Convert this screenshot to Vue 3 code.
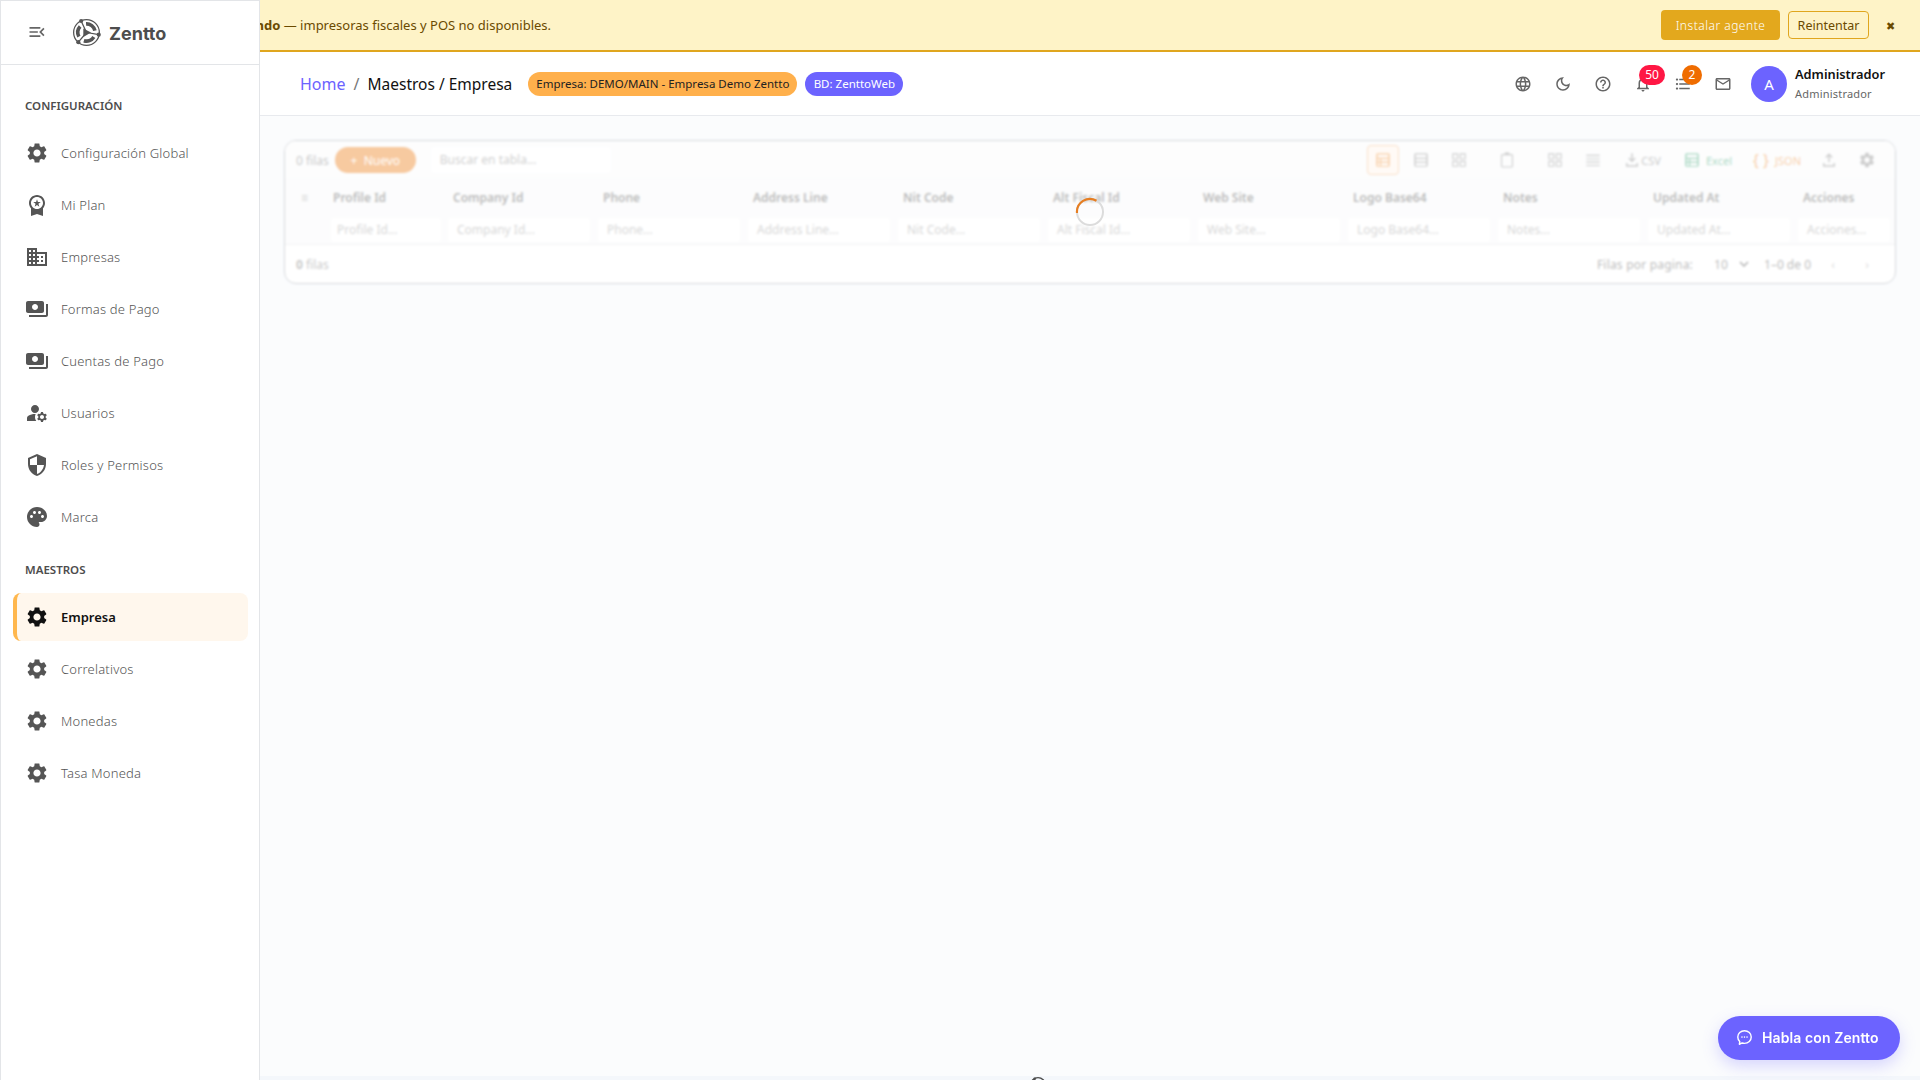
<template>
  <div class="app-root">
    <div class="agent-banner">
      <p class="banner-text"><b>No respondiendo</b> — impresoras fiscales y POS no disponibles.</p>
      <button class="btn-install">Instalar agente</button>
      <button class="btn-retry">Reintentar</button>
      <span class="banner-close">✖</span>
    </div>

    <aside class="drawer">
      <div class="drawer-head">
        <svg class="menu-open" viewBox="0 0 24 24"><path :d="icons.menuOpen" /></svg>
        <svg class="logo" viewBox="0 0 32 32">
          <circle cx="16" cy="16" r="14.200" fill="none" stroke="#555" stroke-width="1.400" />
          <g fill="none" stroke="#555">
            <path d="M15.500 6.500A9.500 9.500 0 0 1 25.300 14" stroke-width="4" />
            <path d="M24.100 21A9.500 9.500 0 0 1 13.100 25" stroke-width="4" />
            <path d="M7.600 20.500A9.500 9.500 0 0 1 9 9.500" stroke-width="4" />
            <path d="M16 16 10.100 3.300M16 16l13.800 2.400M16 16 7 26.700" stroke-width="1.400" />
          </g>
          <path d="M12.500 11.500 21 16l-8.500 5z" fill="#555" />
          <circle cx="10.100" cy="3.300" r="2.300" fill="#555" />
          <circle cx="29.500" cy="18.400" r="2.300" fill="#555" />
          <circle cx="7" cy="26.700" r="2.300" fill="#555" />
        </svg>
        <span class="brand">Zentto</span>
      </div>

      <template v-for="group in menu" :key="group.title">
        <div class="group-title">{{ group.title }}</div>
        <div
          v-for="item in group.items"
          :key="item.label"
          class="nav-item"
          :class="{ active: item.active }"
        >
          <svg class="nav-icon" viewBox="0 0 24 24"><path :d="icons[item.icon]" /></svg>
          <span>{{ item.label }}</span>
        </div>
      </template>
    </aside>

    <div class="page">
      <header class="appbar">
        <nav class="crumbs">
          <a class="crumb-home">Home</a>
          <span class="crumb-sep">/</span>
          <span class="crumb-current">Maestros / Empresa</span>
        </nav>
        <span class="chip chip-company">Empresa: DEMO/MAIN - Empresa Demo Zentto</span>
        <span class="chip chip-db">BD: ZenttoWeb</span>

        <div class="bar-actions">
          <button v-for="a in barActions" :key="a.icon" class="bar-btn">
            <svg viewBox="0 0 24 24"><path :d="icons[a.icon]" /></svg>
            <span v-if="a.badge" class="badge" :class="a.tone">{{ a.badge }}</span>
          </button>
        </div>

        <div class="avatar">A</div>
        <div class="user">
          <strong>Administrador</strong>
          <small>Administrador</small>
        </div>
      </header>

      <main class="content">
        <section class="grid-card">
          <div class="grid-toolbar">
            <span class="muted">0 filas</span>
            <button class="btn-new">+ &nbsp;Nuevo</button>
            <div class="grid-search">Buscar en tabla...</div>
            <div class="tools">
              <span class="tool tool-on"><svg viewBox="0 0 24 24"><path :d="icons.table" /></svg></span>
              <span class="tool"><svg viewBox="0 0 24 24"><path :d="icons.rows" /></svg></span>
              <span class="tool"><svg viewBox="0 0 24 24"><path :d="icons.apps" /></svg></span>
              <span class="tool wide"><svg viewBox="0 0 24 24"><path :d="icons.clip" /></svg></span>
              <span class="tool wide"><svg viewBox="0 0 24 24"><path :d="icons.apps" /></svg></span>
              <span class="tool"><svg viewBox="0 0 24 24"><path :d="icons.lines" /></svg></span>
              <span class="tool-text csv"><svg viewBox="0 0 24 24"><path :d="icons.download" /></svg>CSV</span>
              <span class="tool-text excel"><svg viewBox="0 0 24 24"><path :d="icons.table" /></svg>Excel</span>
              <span class="tool-text json"><b>{ }</b>JSON</span>
              <span class="tool upload"><svg viewBox="0 0 24 24"><path :d="icons.upload" /></svg></span>
              <span class="tool"><svg viewBox="0 0 24 24"><path :d="icons.gear" /></svg></span>
            </div>
          </div>

          <div class="grid-head">
            <span class="row-num">≡</span>
            <span v-for="c in columns" :key="c" class="col-name">{{ c }}</span>
          </div>
          <div class="grid-filter">
            <span class="row-num"></span>
            <span v-for="c in columns" :key="c" class="filter-cell"><i>{{ c }}...</i></span>
          </div>

          <div class="grid-foot">
            <span class="muted"><b>0</b> filas</span>
            <div class="pager">
              <span class="page-label">Filas por pagina:</span>
              <span class="page-size">10
                <svg viewBox="0 0 24 24"><path d="M7.410 8.590 12 13.170l4.590-4.580L18 10l-6 6-6-6z" /></svg>
              </span>
              <span>1–0 de 0</span>
              <span class="page-arrow">‹</span>
              <span class="page-arrow">›</span>
            </div>
          </div>
        </section>

        <div class="load-veil"></div>
        <svg class="spinner" viewBox="0 0 30 30">
          <circle cx="15" cy="15" r="13" fill="none" stroke="#dcdcdc" stroke-width="2" />
          <path d="M2 16A13 13 0 0 1 21.500 3.700" fill="none" stroke="#e67e22" stroke-width="2.200" />
        </svg>
      </main>

      <footer class="page-foot">
        <svg class="foot-logo" viewBox="0 0 32 32">
          <circle cx="16" cy="16" r="13" fill="none" stroke="#4d4d4d" stroke-width="2.400" />
          <circle cx="10" cy="5" r="2.300" fill="#4d4d4d" />
        </svg>
      </footer>
    </div>

    <button class="chat-fab">
      <svg viewBox="0 0 24 24">
        <path d="M12 3.500c-4.800 0-8.500 3.500-8.500 8 0 2.300 1 4.400 2.600 5.800L5.500 20.500l3.600-1.600c.9.300 1.900.500 2.900.500 4.800 0 8.500-3.500 8.500-8s-3.700-8-8.500-8z" fill="none" stroke="#fff" stroke-width="1.800" stroke-linejoin="round" />
        <circle cx="8.800" cy="11.500" r="1" fill="#fff" />
        <circle cx="12" cy="11.500" r="1" fill="#fff" />
        <circle cx="15.200" cy="11.500" r="1" fill="#fff" />
      </svg>
      Habla con Zentto
    </button>
  </div>
</template>

<script setup>
const icons = {
  menuOpen: 'M3 18h13v-2H3v2zm0-5h10v-2H3v2zm0-7v2h13V6H3zm18 9.59L17.42 12 21 8.41 19.59 7l-5 5 5 5L21 15.59z',
  gear: 'M19.14 12.94c.04-.3.06-.61.06-.94 0-.32-.02-.64-.07-.94l2.03-1.58c.18-.14.23-.41.12-.61l-1.92-3.32c-.12-.22-.37-.29-.59-.22l-2.39.96c-.5-.38-1.03-.7-1.62-.94l-.36-2.54c-.04-.24-.24-.41-.48-.41h-3.84c-.24 0-.43.17-.47.41l-.36 2.54c-.59.24-1.13.57-1.62.94l-2.39-.96c-.22-.08-.47 0-.59.22L2.74 8.87c-.12.21-.08.47.12.61l2.03 1.58c-.05.3-.09.63-.09.94s.02.64.07.94l-2.03 1.58c-.18.14-.23.41-.12.61l1.92 3.32c.12.22.37.29.59.22l2.39-.96c.5.38 1.03.7 1.62.94l.36 2.54c.05.24.24.41.48.41h3.84c.24 0 .44-.17.47-.41l.36-2.54c.59-.24 1.13-.56 1.62-.94l2.39.96c.22.08.47 0 .59-.22l1.92-3.32c.12-.22.07-.47-.12-.61l-2.01-1.58zM12 15.6c-1.98 0-3.6-1.62-3.6-3.6s1.62-3.6 3.6-3.6 3.6 1.62 3.6 3.6-1.62 3.6-3.6 3.6z',
  premium: 'M9.68 13.69 12 11.93l2.31 1.76-.88-2.85L15.75 9h-2.84L12 6.19 11.09 9H8.25l2.31 1.84-.88 2.85zM20 10c0-4.42-3.58-8-8-8s-8 3.58-8 8c0 2.03.76 3.87 2 5.28V23l6-2 6 2v-7.72c1.24-1.41 2-3.25 2-5.28zm-8-6c3.31 0 6 2.69 6 6s-2.69 6-6 6-6-2.69-6-6 2.69-6 6-6z',
  business: 'M12 7V3H2v18h20V7H12zM6 19H4v-2h2v2zm0-4H4v-2h2v2zm0-4H4V9h2v2zm0-4H4V5h2v2zm4 12H8v-2h2v2zm0-4H8v-2h2v2zm0-4H8V9h2v2zm0-4H8V5h2v2zm10 12h-8v-2h2v-2h-2v-2h2v-2h-2V9h8v10zm-2-8h-2v2h2v-2zm0 4h-2v2h2v-2z',
  payments: 'M19 14V6c0-1.1-.9-2-2-2H3c-1.1 0-2 .9-2 2v8c0 1.1.9 2 2 2h14c1.1 0 2-.9 2-2zm-9-1c-1.66 0-3-1.34-3-3s1.34-3 3-3 3 1.34 3 3-1.34 3-3 3zm13-6v11c0 1.1-.9 2-2 2H4v-2h17V7h2z',
  manage: 'M10.67 13.02c-.22-.01-.44-.02-.67-.02-2.42 0-4.68.67-6.61 1.82-.88.52-1.39 1.5-1.39 2.53V20h9.26c-.79-1.13-1.26-2.51-1.26-4 0-1.07.25-2.07.67-2.98zM10 12c2.21 0 4-1.79 4-4s-1.79-4-4-4-4 1.79-4 4 1.79 4 4 4zM20.75 16c0-.22-.03-.42-.06-.63l1.14-1.01-1-1.73-1.45.49c-.32-.27-.68-.48-1.08-.63L18 11h-2l-.3 1.49c-.4.15-.76.36-1.08.63l-1.45-.49-1 1.73 1.14 1.01c-.03.21-.06.41-.06.63s.03.42.06.63l-1.14 1.01 1 1.73 1.45-.49c.32.27.68.48 1.08.63L16 21h2l.3-1.49c.4-.15.76-.36 1.08-.63l1.45.49 1-1.73-1.14-1.01c.03-.21.06-.41.06-.63zM17 18c-1.1 0-2-.9-2-2s.9-2 2-2 2 .9 2 2-.9 2-2 2z',
  security: 'M12 1 3 5v6c0 5.55 3.84 10.74 9 12 5.16-1.26 9-6.45 9-12V5l-9-4zm0 10.99h7c-.53 4.12-3.28 7.79-7 8.94V12H5V6.3l7-3.11v8.8z',
  palette: 'M12 2C6.49 2 2 6.49 2 12s4.49 10 10 10c1.38 0 2.5-1.12 2.5-2.5 0-.61-.23-1.2-.64-1.67-.08-.1-.13-.21-.13-.33 0-.28.22-.5.5-.5H16c3.31 0 6-2.69 6-6 0-4.96-4.49-9-10-9zm5.5 11c-.83 0-1.5-.67-1.5-1.5s.67-1.5 1.5-1.5 1.5.67 1.5 1.5-.67 1.5-1.5 1.5zm-3-4c-.83 0-1.5-.67-1.5-1.5S13.67 6 14.5 6s1.5.67 1.5 1.5S15.33 9 14.5 9zM5 11.5c0-.83.67-1.5 1.5-1.5s1.5.67 1.5 1.5S7.33 13 6.5 13 5 12.33 5 11.5zm6-4c0 .83-.67 1.5-1.5 1.5S8 8.33 8 7.5 8.67 6 9.5 6s1.5.67 1.5 1.5z',
  language: 'M11.99 2C6.47 2 2 6.48 2 12s4.47 10 9.99 10C17.52 22 22 17.52 22 12S17.52 2 11.99 2zm6.93 6h-2.95c-.32-1.25-.78-2.45-1.38-3.56 1.84.63 3.37 1.91 4.33 3.56zM12 4.04c.83 1.2 1.48 2.53 1.91 3.96h-3.82c.43-1.43 1.08-2.76 1.91-3.96zM4.26 14C4.1 13.36 4 12.69 4 12s.1-1.36.26-2h3.38c-.08.66-.14 1.32-.14 2s.06 1.34.14 2H4.26zm.82 2h2.95c.32 1.25.78 2.45 1.38 3.56-1.84-.63-3.37-1.9-4.33-3.56zm2.95-8H5.08c.96-1.66 2.49-2.93 4.33-3.56C8.81 5.55 8.35 6.75 8.03 8zM12 19.96c-.83-1.2-1.48-2.53-1.91-3.96h3.82c-.43 1.43-1.08 2.76-1.91 3.96zM14.34 14H9.66c-.09-.66-.16-1.32-.16-2s.07-1.35.16-2h4.68c.09.65.16 1.32.16 2s-.07 1.34-.16 2zm.25 5.56c.6-1.11 1.06-2.31 1.38-3.56h2.95c-.96 1.65-2.49 2.93-4.33 3.56zM16.36 14c.08-.66.14-1.32.14-2s-.06-1.34-.14-2h3.38c.16.64.26 1.31.26 2s-.1 1.36-.26 2h-3.38z',
  moon: 'M9.37 5.51c-.18.64-.27 1.31-.27 1.99 0 4.08 3.32 7.4 7.4 7.4.68 0 1.35-.09 1.99-.27C17.45 17.19 14.93 19 12 19c-3.86 0-7-3.14-7-7 0-2.93 1.81-5.45 4.37-6.49zM12 3c-4.97 0-9 4.03-9 9s4.03 9 9 9 9-4.03 9-9c0-.46-.04-.92-.1-1.36-.98 1.37-2.58 2.26-4.4 2.26-2.98 0-5.4-2.42-5.4-5.4 0-1.81.89-3.42 2.26-4.4-.44-.06-.9-.1-1.36-.1z',
  help: 'M11 18h2v-2h-2v2zm1-16C6.48 2 2 6.48 2 12s4.48 10 10 10 10-4.48 10-10S17.52 2 12 2zm0 18c-4.41 0-8-3.59-8-8s3.59-8 8-8 8 3.59 8 8-3.59 8-8 8zm0-14c-2.21 0-4 1.79-4 4h2c0-1.1.9-2 2-2s2 .9 2 2c0 2-3 1.75-3 5h2c0-2.25 3-2.5 3-5 0-2.21-1.79-4-4-4z',
  bell: 'M12 22c1.1 0 2-.9 2-2h-4c0 1.1.9 2 2 2zm6-6v-5c0-3.07-1.63-5.64-4.5-6.32V4c0-.83-.67-1.5-1.5-1.5s-1.5.67-1.5 1.5v.68C7.64 5.36 6 7.92 6 11v5l-2 2v1h16v-1l-2-2zm-2 1H8v-6c0-2.48 1.51-4.5 4-4.5s4 2.02 4 4.5v6z',
  list: 'M4 10.5c-.83 0-1.5.67-1.5 1.5s.67 1.5 1.5 1.5 1.5-.67 1.5-1.5-.67-1.5-1.5-1.5zm0-6c-.83 0-1.5.67-1.5 1.5S3.17 7.5 4 7.5 5.5 6.83 5.5 6 4.83 4.5 4 4.5zm0 12c-.83 0-1.5.68-1.5 1.5s.68 1.5 1.5 1.5 1.5-.68 1.5-1.5-.67-1.5-1.5-1.5zM7 19h14v-2H7v2zm0-6h14v-2H7v2zm0-8v2h14V5H7z',
  mail: 'M20 4H4c-1.1 0-1.99.9-1.99 2L2 18c0 1.1.9 2 2 2h16c1.1 0 2-.9 2-2V6c0-1.1-.9-2-2-2zm0 14H4V8l8 5 8-5v10zm-8-7L4 6h16l-8 5z',
  table: 'M5 3h14c1.100 0 2 .9 2 2v14c0 1.100-.9 2-2 2H5c-1.100 0-2-.9-2-2V5c0-1.100.9-2 2-2zm0 1.500V9h14V4.500H5zm0 6V14h3v-3.500H5zm4.500 0V14H19v-3.500H9.500zm-4.500 5v4h3v-4H5zm4.500 0v4H19v-4H9.500z',
  rows: 'M5 3h14c1.100 0 2 .9 2 2v14c0 1.100-.9 2-2 2H5c-1.100 0-2-.9-2-2V5c0-1.100.9-2 2-2zm0 1.500V9h14V4.500H5zm0 6V14h14v-3.500H5zm0 5v4h14v-4H5z',
  apps: 'M3 3h8v8H3V3zm1.500 1.500v5h5v-5h-5zM13 3h8v8h-8V3zm1.500 1.500v5h5v-5h-5zM3 13h8v8H3v-8zm1.500 1.500v5h5v-5h-5zM13 13h8v8h-8v-8zm1.500 1.500v5h5v-5h-5z',
  clip: 'M9 2h6v2h3c1.100 0 2 .9 2 2v14c0 1.100-.9 2-2 2H6c-1.100 0-2-.9-2-2V6c0-1.100.9-2 2-2h3V2zM5.500 5.500v15h13v-15h-13z',
  lines: 'M3 5h18v1.500H3V5zm0 4.500h18V11H3V9.500zM3 14h18v1.500H3V14zm0 4.500h18V20H3v-1.500z',
  download: 'M13 3h-2v8.200L8.400 8.600 7 10l5 5 5-5-1.400-1.400-2.600 2.600V3zM4 16v5h16v-5h-2v3H6v-3H4z',
  upload: 'M11 15h2V6.800l2.600 2.600L17 8l-5-5-5 5 1.400 1.400L11 6.800V15zM4 16v5h16v-5h-2v3H6v-3H4z'
}

const menu = [
  {
    title: 'CONFIGURACIÓN',
    items: [
      { label: 'Configuración Global', icon: 'gear' },
      { label: 'Mi Plan', icon: 'premium' },
      { label: 'Empresas', icon: 'business' },
      { label: 'Formas de Pago', icon: 'payments' },
      { label: 'Cuentas de Pago', icon: 'payments' },
      { label: 'Usuarios', icon: 'manage' },
      { label: 'Roles y Permisos', icon: 'security' },
      { label: 'Marca', icon: 'palette' }
    ]
  },
  {
    title: 'MAESTROS',
    items: [
      { label: 'Empresa', icon: 'gear', active: true },
      { label: 'Correlativos', icon: 'gear' },
      { label: 'Monedas', icon: 'gear' },
      { label: 'Tasa Moneda', icon: 'gear' }
    ]
  }
]

const barActions = [
  { icon: 'language' },
  { icon: 'moon' },
  { icon: 'help' },
  { icon: 'bell', badge: '50', tone: 'red' },
  { icon: 'list', badge: '2', tone: 'amber' },
  { icon: 'mail' }
]

const columns = [
  'Profile Id', 'Company Id', 'Phone', 'Address Line', 'Nit Code', 'Alt Fiscal Id',
  'Web Site', 'Logo Base64', 'Notes', 'Updated At', 'Acciones'
]
</script>

<style>
html, body {
  margin: 0;
  height: 100%;
  overflow: hidden;
}
</style>

<style scoped>
.app-root {
  position: relative;
  display: flex;
  flex-direction: column;
  height: 1080px;
  overflow: hidden;
  font-family: "Noto Sans", "Liberation Sans", sans-serif;
  background: #f4f7fb;
  color: #333;
}

button {
  font-family: inherit;
  cursor: pointer;
}

/* banner runs under the drawer */
.agent-banner {
  flex: none;
  display: flex;
  align-items: center;
  height: 50px;
  padding: 0 9px 0 169px;
  background: #fef3c7;
  border-bottom: 2px solid #e0a61e;
  color: #6b4a00;
}

.banner-text {
  flex: 1;
  margin: 0;
  font-size: 13px;
}

.banner-text b {
  font-weight: 700;
}

.btn-install {
  width: 119px;
  height: 30px;
  margin-right: 8px;
  border: 0;
  border-radius: 4px;
  background: #e3a81d;
  color: #fff;
  font-size: 12px;
  font-weight: 300;
  letter-spacing: .5px;
}

.btn-retry {
  width: 81px;
  height: 28px;
  padding: 0;
  border: 1px solid #e0a61e;
  border-radius: 4px;
  background: transparent;
  color: #6b4a00;
  font-size: 12.500px;
}

.banner-close {
  width: 42px;
  text-align: center;
  font-size: 11px;
  color: #6b4a00;
}

.drawer {
  position: absolute;
  top: 0;
  left: 0;
  bottom: 0;
  z-index: 5;
  width: 260px;
  box-sizing: border-box;
  background: #fff;
  border: 1px solid #e3e5e8;
  border-bottom: 0;
}

.drawer-head {
  display: flex;
  align-items: center;
  height: 63px;
  padding-left: 26px;
  border-bottom: 1px solid #e3e5e8;
}

.menu-open {
  width: 20px;
  height: 20px;
  margin-top: -2px;
  fill: #666;
}

.logo {
  width: 29px;
  height: 29px;
  margin-left: 25px;
}

.brand {
  margin-left: 8px;
  margin-top: 2px;
  font-size: 18px;
  font-weight: 700;
  color: #4d4d4d;
  font-family: Inter, "Noto Sans", sans-serif;
}

.group-title {
  height: 20px;
  margin-bottom: 11px;
  padding: 31px 0 0 24px;
  font-size: 11.500px;
  font-weight: 600;
  line-height: 20px;
  color: #4d4d4d;
}

.nav-item + .group-title {
  padding-top: 17px;
}

.nav-item {
  display: flex;
  align-items: center;
  height: 52px;
  padding-left: 24px;
  font-size: 13px;
  font-weight: 300;
  letter-spacing: .2px;
  color: #555;
}

.nav-icon {
  flex: none;
  width: 24px;
  height: 24px;
  margin-right: 12px;
  fill: #555;
}

.nav-item.active {
  box-sizing: border-box;
  height: 48px;
  margin: 13px 11px 2px 12px;
  padding-left: 8px;
  border-left: 4px solid #ffb74d;
  border-radius: 8px;
  background: #fff7ed;
  color: #111;
  font-weight: 600;
  letter-spacing: 0;
}

.nav-item.active .nav-icon {
  fill: #111;
}

.page {
  flex: none;
  margin-left: 260px;
  min-width: 0;
}

.appbar {
  box-sizing: border-box;
  display: flex;
  align-items: center;
  height: 64px;
  padding: 0 12px 0 40px;
  background: #fff;
  border-bottom: 1px solid #e8eaee;
}

.crumbs {
  display: flex;
  align-items: center;
  gap: 8px;
  margin-right: 16px;
  font-size: 16px;
}

.crumb-home {
  color: #6c63ff;
}

.crumb-sep {
  color: #777;
}

.crumb-current {
  color: #111;
  font-size: 15.500px;
}

.chip {
  display: inline-flex;
  align-items: center;
  justify-content: center;
  height: 24px;
  border-radius: 12px;
  font-size: 11.500px;
}

.chip-company {
  width: 269px;
  margin-right: 8px;
  background: #ffb04c;
  color: #222;
}

.chip-db {
  width: 98px;
  background: #6c63ff;
  color: #fff;
}

.bar-actions {
  display: flex;
  margin-left: auto;
  margin-right: 8px;
}

.bar-btn {
  position: relative;
  width: 40px;
  height: 40px;
  padding: 8px;
  border: 0;
  background: none;
}

.bar-btn svg {
  display: block;
  width: 18px;
  height: 18px;
  margin: 3px;
  fill: #666;
}

.badge {
  position: absolute;
  top: 1px;
  left: 19px;
  display: flex;
  align-items: center;
  justify-content: center;
  min-width: 20px;
  height: 20px;
  padding: 0 3px;
  box-sizing: border-box;
  border-radius: 10px;
  font-size: 12px;
  color: #fff;
}

.badge.red {
  left: 16px;
  min-width: 26px;
  background: #ff1744;
}

.badge.amber {
  background: #ef6c00;
}

.avatar {
  display: flex;
  align-items: center;
  justify-content: center;
  width: 36px;
  height: 36px;
  border-radius: 50%;
  background: #6c63ff;
  color: #fff;
  font-size: 15px;
}

.user {
  display: flex;
  flex-direction: column;
  margin-left: 8px;
  width: 113px;
  line-height: 1.2;
}

.user strong {
  font-size: 12.800px;
  font-weight: 600;
  color: #111;
}

.user small {
  margin-top: 5px;
  font-size: 11px;
  color: #666;
  letter-spacing: .2px;
}

.content {
  position: relative;
  box-sizing: border-box;
  height: 960px;
  padding: 24px 24px 0;
}

.grid-card {
  box-sizing: border-box;
  height: 144px;
  border: 1px solid #9a9fa6;
  border-radius: 12px;
  background: #fff;
  font-size: 12px;
  color: #555;
  overflow: hidden;
}

.grid-toolbar {
  box-sizing: border-box;
  display: flex;
  align-items: center;
  height: 37px;
  padding: 1px 0 0 11px;
  background: #f9fafb;
}

.muted {
  color: #777;
}

.btn-new {
  width: 81px;
  height: 26px;
  margin-left: 6px;
  border: 0;
  border-radius: 13px;
  background: #ec7a12;
  color: #fff;
  font-size: 12px;
}

.grid-search {
  box-sizing: border-box;
  width: 180px;
  height: 26px;
  margin-left: 15px;
  padding-left: 9px;
  line-height: 26px;
  border-radius: 4px;
  background: #fff;
  color: #888;
}

.tools {
  display: flex;
  align-items: center;
  gap: 6px;
  margin-left: auto;
  margin-right: 12px;
  fill: #888;
  color: #777;
  font-size: 11px;
}

.tool,
.tool-text {
  display: flex;
  align-items: center;
  justify-content: center;
  height: 30px;
}

.tool {
  width: 32px;
}

.tools svg {
  width: 18px;
  height: 18px;
  fill-rule: evenodd;
}

.tool-on {
  box-sizing: border-box;
  border: 1px solid #f3b27a;
  border-radius: 4px;
  background: #fff3e8;
  fill: #ee8a2c;
}

.wide {
  margin-left: 10px;
}

.csv {
  margin-left: 8px;
}

.excel {
  margin-left: 16px;
  gap: 5px;
  color: #2e9e6b;
  fill: #2e9e6b;
}

.json {
  margin-left: 13px;
  gap: 4px;
  color: #ee8a2c;
}

.json b {
  width: 20px;
  text-align: center;
  font-size: 16px;
  font-weight: 400;
}

.upload {
  margin-left: 6px;
}

.grid-head,
.grid-filter {
  box-sizing: border-box;
  display: grid;
  grid-template-columns: 48px 120px repeat(10, 150px);
  align-items: center;
  background: #f7f8f9;
}

.grid-head {
  height: 36px;
  padding-top: 2px;
  font-weight: 600;
}

.grid-filter {
  height: 31px;
  padding-top: 2px;
  border-bottom: 1px solid #e0e2e6;
}

.row-num {
  padding-left: 16px;
  font-weight: 400;
  color: #999;
}

.filter-cell {
  min-width: 0;
}

.filter-cell i {
  box-sizing: border-box;
  display: block;
  width: 142px;
  height: 24px;
  margin-left: -5px;
  padding-left: 9px;
  line-height: 24px;
  border-radius: 3px;
  background: #fff;
  font-style: normal;
  color: #999;
}

.filter-cell:nth-child(2) i {
  width: 110px;
  margin-left: -2px;
  padding-left: 6px;
}

.filter-cell:last-child i {
  width: 92px;
}

.grid-foot {
  display: flex;
  align-items: center;
  justify-content: space-between;
  height: 38px;
  padding: 0 16px 0 11px;
}

.pager {
  display: flex;
  align-items: center;
  gap: 10px;
}

.page-label {
  letter-spacing: .2px;
}

.page-size {
  display: flex;
  align-items: center;
  box-sizing: border-box;
  width: 51px;
  height: 24px;
  padding-left: 11px;
  border-radius: 4px;
  background: #fff;
}

.page-size svg {
  width: 18px;
  height: 18px;
  margin-left: 7px;
  fill: #444;
}

.page-arrow {
  width: 24px;
  text-align: center;
  color: #aaa;
}

/* loading mask over the table */
.load-veil {
  position: absolute;
  inset: 0;
  background: rgba(255, 255, 255, .6);
  backdrop-filter: blur(1.200px);
}

.spinner {
  position: absolute;
  left: 815px;
  top: 81px;
  width: 30px;
  height: 30px;
}

.page-foot {
  padding-left: 769px;
}

.foot-logo {
  display: block;
  width: 18px;
  height: 18px;
}

.chat-fab {
  position: absolute;
  right: 20px;
  bottom: 20px;
  z-index: 6;
  display: flex;
  align-items: center;
  gap: 8px;
  width: 182px;
  height: 44px;
  padding: 0 0 2px 17px;
  border: 0;
  border-radius: 22px;
  background: #6c63ff;
  box-shadow: 0 6px 16px rgba(108, 99, 255, .25);
  color: #fff;
  font-size: 14px;
  font-weight: 600;
  letter-spacing: .1px;
  font-family: Inter, "Noto Sans", sans-serif;
  white-space: nowrap;
}

.chat-fab svg {
  width: 19px;
  height: 19px;
}
</style>
